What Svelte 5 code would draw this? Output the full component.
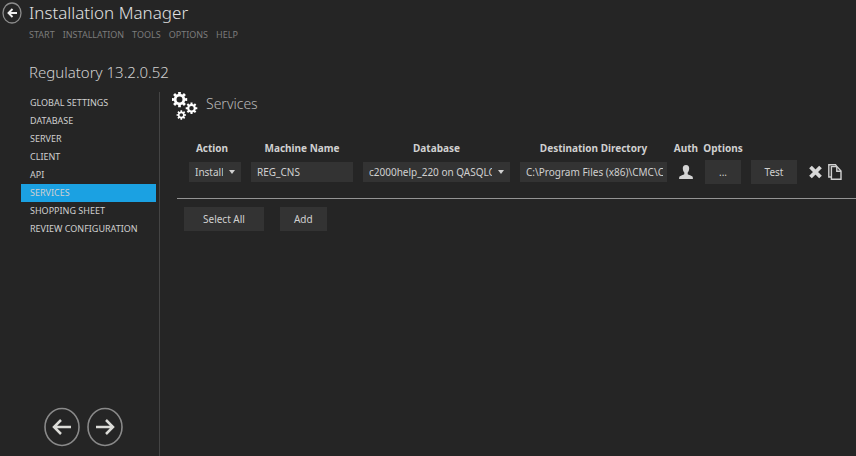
<script lang="ts">
  const menu = ['START', 'INSTALLATION', 'TOOLS', 'OPTIONS', 'HELP'];
  const sections = [
    'GLOBAL SETTINGS',
    'DATABASE',
    'SERVER',
    'CLIENT',
    'API',
    'SERVICES',
    'SHOPPING SHEET',
    'REVIEW CONFIGURATION'
  ];

  let active = $state('SERVICES');
  let action = $state('Install');
  let machine = $state('REG_CNS');
  let database = $state('c2000help_220 on QASQLCNS');
  let directory = $state('C:\\Program Files (x86)\\CMC\\CNS');

  // outline of a toothed wheel around a centre point
  function gear(cx: number, cy: number, r: number) {
    const points: string[] = [];
    for (let i = 0; i < 8; i++) {
      const mid = (i * Math.PI) / 4;
      for (const [offset, k] of [[-0.23, 0.74], [-0.18, 1], [0.18, 1], [0.23, 0.74]]) {
        points.push(`${cx + Math.cos(mid + offset) * r * k} ${cy + Math.sin(mid + offset) * r * k}`);
      }
    }
    const h = r * 0.38;
    return `M${points.join('L')}ZM${cx - h} ${cy}a${h} ${h} 0 1 0 ${2 * h} 0a${h} ${h} 0 1 0 ${-2 * h} 0Z`;
  }
</script>

<div class="app">
  <header>
    <button class="back" aria-label="Back">
      <svg width="20" height="22" viewBox="0 0 20 22" fill="none">
        <ellipse cx="10" cy="11" rx="9" ry="10" stroke="#8c8c8c" stroke-width="1.3" />
        <path d="M15 11H7M10.5 7L6.5 11L10.5 15" stroke="#f0f0f0" stroke-width="1.9" />
      </svg>
    </button>
    <div class="heading">
      <h1>Installation Manager</h1>
      <nav class="menu">
        {#each menu as item}
          <a href="#{item.toLowerCase()}">{item}</a>
        {/each}
      </nav>
      <h2>Regulatory 13.2.0.52</h2>
    </div>
  </header>

  <div class="body">
    <aside>
      <nav class="sections">
        {#each sections as section}
          <button class:active={section === active} onclick={() => (active = section)}>{section}</button>
        {/each}
      </nav>
      <div class="pager">
        <button aria-label="Previous">
          <svg width="36" height="40" viewBox="0 0 36 40" fill="none">
            <ellipse cx="18" cy="20" rx="17" ry="18.5" stroke="#8a8a8a" stroke-width="1.6" />
            <path d="M27 20H10M17 13L10 20L17 27" stroke="#dcdcd8" stroke-width="2.5" />
          </svg>
        </button>
        <button aria-label="Next">
          <svg width="36" height="40" viewBox="0 0 36 40" fill="none">
            <ellipse cx="18" cy="20" rx="17" ry="18.5" stroke="#8a8a8a" stroke-width="1.6" />
            <path d="M9 20H26M19 13L26 20L19 27" stroke="#dcdcd8" stroke-width="2.5" />
          </svg>
        </button>
      </div>
    </aside>

    <main>
      <div class="title">
        <svg width="26" height="28" viewBox="0 0 26 28" fill="#fff" fill-rule="evenodd">
          <path d={gear(7.5, 7.5, 7.8)} />
          <path d={gear(19.5, 16.2, 5.9)} />
          <path d={gear(9.3, 23, 4.8)} />
        </svg>
        <h3>Services</h3>
      </div>

      <div class="services">
        <table>
          <colgroup>
            <col class="col-action" />
            <col class="col-machine" />
            <col />
            <col />
            <col class="col-auth" />
            <col class="col-options" />
            <col class="col-test" />
            <col class="col-tools" />
          </colgroup>
          <thead>
            <tr>
              <th class="first">Action</th>
              <th>Machine Name</th>
              <th>Database</th>
              <th>Destination Directory</th>
              <th>Auth</th>
              <th>Options</th>
              <th></th>
              <th></th>
            </tr>
          </thead>
          <tbody>
            <tr>
              <td>
                <div class="select">
                  <select aria-label="Action" bind:value={action}>
                    <option>Install</option>
                  </select>
                  <svg width="6" height="4" viewBox="0 0 6 4"><path d="M0 0H6L3 4Z" fill="#d0d0d0" /></svg>
                </div>
              </td>
              <td><input type="text" aria-label="Machine Name" bind:value={machine} /></td>
              <td>
                <div class="select">
                  <select aria-label="Database" bind:value={database}>
                    <option>c2000help_220 on QASQLCNS</option>
                  </select>
                  <svg width="6" height="4" viewBox="0 0 6 4"><path d="M0 0H6L3 4Z" fill="#d0d0d0" /></svg>
                </div>
              </td>
              <td><input type="text" aria-label="Destination Directory" bind:value={directory} /></td>
              <td class="auth">
                <button class="icon" aria-label="Auth">
                  <svg width="14" height="14" viewBox="0 0 14 14" fill="#d4d4d4">
                    <path d="M7 0C4.7 0 3.7 1.5 3.8 3.6C3.9 5.4 4.5 6.8 5.3 7.6V9.2C4.6 10.1 1.2 10.4 .5 11.6C.2 12.2 .1 13 .1 14H13.9C13.9 13 13.8 12.2 13.5 11.6C12.8 10.4 9.4 10.1 8.7 9.2V7.6C9.5 6.8 10.1 5.4 10.2 3.6C10.3 1.5 9.3 0 7 0Z" />
                  </svg>
                </button>
              </td>
              <td><button class="btn">...</button></td>
              <td><button class="btn">Test</button></td>
              <td>
                <div class="tools">
                  <button class="icon" aria-label="Remove">
                    <svg width="13" height="14" viewBox="0 0 13 14" fill="none">
                      <path d="M1.5 2L11.5 12M11.5 2L1.5 12" stroke="#d8d8d8" stroke-width="3.8" />
                    </svg>
                  </button>
                  <button class="icon" aria-label="Copy">
                    <svg width="14" height="16" viewBox="0 0 14 16" fill="none" stroke="#d0d0d0" stroke-width="1.4">
                      <path d="M3 13H.8V.8H7.5L8.8 2.4" />
                      <path d="M3.4 2.6H9L13 7V15.2H3.4Z" />
                      <path d="M8.8 2.8V7.2H13" />
                    </svg>
                  </button>
                </div>
              </td>
            </tr>
          </tbody>
        </table>
      </div>

      <div class="actions">
        <button class="btn wide">Select All</button>
        <button class="btn">Add</button>
      </div>
    </main>
  </div>
</div>

<style>
  :global(body) {
    background: #252525;
  }

  .app {
    display: flex;
    flex-direction: column;
    min-height: 100vh;
    background: #252525;
    color: #d0d0d0;
    font-family: 'Noto Sans', 'Open Sans', sans-serif;
    font-size: 10px;
    line-height: 16px;
  }

  button,
  input,
  select {
    font: inherit;
    color: inherit;
    border: none;
    border-radius: 0;
    margin: 0;
    padding: 0;
    background: none;
    box-sizing: border-box;
  }

  svg {
    display: block;
    flex: none;
  }

  h1,
  h2,
  h3 {
    margin: 0;
    font-weight: 300;
  }

  header {
    display: flex;
    align-items: flex-start;
    gap: 7px;
    padding: 0 2px;
  }

  .back {
    margin-top: 2px;
  }

  h1 {
    font-size: 17px;
    line-height: 26px;
    color: #e0e0e0;
  }

  h2 {
    margin-top: 17px;
    font-size: 15px;
    line-height: 24px;
  }

  .menu {
    display: flex;
    gap: 8px;
    font-size: 9px;
    line-height: 17px;
  }

  .menu a {
    color: #7c7c7c;
    text-decoration: none;
  }

  .body {
    display: flex;
    flex: 1;
    margin-top: 8px;
  }

  aside {
    display: flex;
    flex-direction: column;
    justify-content: space-between;
    box-sizing: border-box;
    width: 160px;
    padding: 2px 3px 9px 21px;
    border-right: 1px solid #444;
  }

  .sections {
    display: flex;
    flex-direction: column;
  }

  .sections button {
    padding-left: 9px;
    font-size: 9px;
    line-height: 18px;
    text-align: left;
  }

  .sections .active {
    background: #1ba1e2;
  }

  .pager {
    display: flex;
    gap: 7px;
    padding-left: 23px;
  }

  main {
    flex: 1;
    min-width: 0;
  }

  .title {
    display: flex;
    align-items: flex-start;
    gap: 8px;
    padding-left: 12px;
  }

  h3 {
    font-size: 14px;
    line-height: 24px;
    color: #b8b8b8;
  }

  .services {
    margin-left: 17px;
    padding: 20px 8px 14px 7px;
    border-bottom: 1px solid #949494;
  }

  table {
    width: 100%;
    table-layout: fixed;
    border-collapse: collapse;
  }

  .col-action {
    width: 62px;
  }

  .col-machine {
    width: 112px;
  }

  .col-auth {
    width: 28px;
  }

  .col-options {
    width: 46px;
  }

  .col-test {
    width: 56px;
  }

  .col-tools {
    width: 46px;
  }

  th {
    padding: 0;
    font-weight: 700;
    white-space: nowrap;
  }

  .first {
    padding-right: 6px;
  }

  td {
    height: 24px;
    padding: 4px 5px 0;
  }

  .auth {
    padding: 4px 0 0;
  }

  td input,
  td select {
    display: block;
    width: 100%;
    height: 20px;
    padding: 0 4px 0 6px;
    background: #333;
  }

  td select {
    appearance: none;
    padding-right: 18px;
  }

  .select {
    position: relative;
  }

  .select svg {
    position: absolute;
    top: 8px;
    right: 6px;
    pointer-events: none;
  }

  .btn {
    height: 24px;
    padding: 0 14px;
    background: #333;
  }

  td .btn {
    display: block;
    width: 100%;
    padding: 0;
  }

  .icon {
    display: block;
    margin: 0 auto;
  }

  .tools {
    display: flex;
    align-items: center;
    gap: 6px;
    padding-left: 2px;
  }

  .tools .icon {
    margin: 0;
  }

  .actions {
    display: flex;
    gap: 16px;
    padding: 8px 24px;
  }

  .actions .wide {
    padding: 0 19px;
  }
</style>
